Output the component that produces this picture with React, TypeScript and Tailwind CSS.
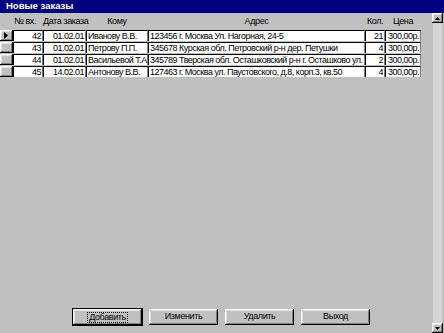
import React from 'react';

type Order = { n: number; date: string; to: string; addr: string; qty: number; price: string };

const orders: Order[] = [
  { n: 42, date: '01.02.01', to: 'Иванову В.В.', addr: '123456 г. Москва Ул. Нагорная, 24-5', qty: 21, price: '300,00р.' },
  { n: 43, date: '01.02.01', to: 'Петрову П.П.', addr: '345678 Курская обл. Петровский р-н дер. Петушки', qty: 4, price: '300,00р.' },
  { n: 44, date: '01.02.01', to: 'Васильевой Т.А.', addr: '345789 Тверская обл. Осташковский р-н г. Осташково ул. Свободы', qty: 2, price: '300,00р.' },
  { n: 45, date: '14.02.01', to: 'Антонову В.В.', addr: '127463 г. Москва ул. Паустовского, д.8, корп.3, кв.50', qty: 4, price: '300,00р.' },
];

const cols = 'grid grid-cols-[13px_30px_43px_62px_217px_20px_36px]';
const cell = 'bg-white h-[11px] leading-[10px] border-t border-l border-black border-r border-r-[#808080] overflow-hidden whitespace-nowrap px-[1px]';
const raised = 'shadow-[inset_-1px_-1px_#000,inset_1px_1px_#fff,inset_-2px_-2px_#808080,inset_2px_2px_#dfdfdf]';

function Btn({ label, focus }: { label: string; focus?: boolean }) {
  return (
    <button
      className={`w-[69px] h-[16px] bg-[#c0c0c0] text-[9px] tracking-[-0.4px] text-black flex items-center justify-center ${raised} ${focus ? 'outline outline-1 outline-black' : ''}`}
    >
      <span className={focus ? 'border border-dotted border-black px-[1px] leading-[9px]' : ''}>{label}</span>
    </button>
  );
}

export default function App() {
  return (
    <div className="w-[444px] h-[333px] bg-[#c0c0c0] flex flex-col overflow-hidden" style={{ fontFamily: '"Liberation Sans", Arial, sans-serif' }}>
      <div className="h-[13px] bg-[#000080] text-white text-[9.5px] font-bold leading-[12px] pl-[6px]">Новые заказы</div>
      <div className="flex flex-1">
        <div className="flex-1 flex flex-col">
          <div className={`${cols} h-[17px] items-center text-[9px] tracking-[-0.4px] text-black whitespace-nowrap`}>
            <div />
            <div className="text-center pr-[6px]">№ вх.</div>
            <div className="text-center">Дата заказа</div>
            <div className="text-center">Кому</div>
            <div className="text-center">Адрес</div>
            <div className="text-center">Кол.</div>
            <div className="text-center">Цена</div>
          </div>
          <div className="flex flex-col gap-[1px] text-[9px] tracking-[-0.5px] text-black">
            {orders.map((o, i) => (
              <div key={o.n} className={`${cols} h-[11px]`}>
                <div className={`h-[11px] bg-[#c0c0c0] ${raised} flex items-center justify-center`}>
                  {i === 0 && (
                    <svg width="5" height="7" viewBox="0 0 5 7"><path d="M0 0L4 3.5L0 7Z" fill="#000" /></svg>
                  )}
                </div>
                <div className={`${cell} text-right`}>{o.n}</div>
                <div className={`${cell} text-right`}>{o.date}</div>
                <div className={cell}>{o.to}</div>
                <div className={cell}>{o.addr}</div>
                <div className={`${cell} text-right`}>{o.qty}</div>
                <div className={`${cell} text-right`}>{o.price}</div>
              </div>
            ))}
          </div>
          <div className="mt-auto flex gap-[7px] pl-[73px] pb-[8px]">
            <Btn label="Добавить" focus />
            <Btn label="Изменить" />
            <Btn label="Удалить" />
            <Btn label="Выход" />
          </div>
        </div>
        <div className="w-[11px] flex flex-col mr-[1px]">
          <div className={`h-[10px] bg-[#c0c0c0] ${raised} flex items-center justify-center`}>
            <svg width="5" height="3" viewBox="0 0 5 3"><path d="M2.5 0L5 3H0Z" fill="#000" /></svg>
          </div>
          <div className="flex-1 bg-[#d4d4d4] border-x border-[#c0c0c0]" />
          <div className={`h-[10px] bg-[#c0c0c0] ${raised} flex items-center justify-center`}>
            <svg width="5" height="3" viewBox="0 0 5 3"><path d="M0 0H5L2.5 3Z" fill="#000" /></svg>
          </div>
        </div>
      </div>
    </div>
  );
}
